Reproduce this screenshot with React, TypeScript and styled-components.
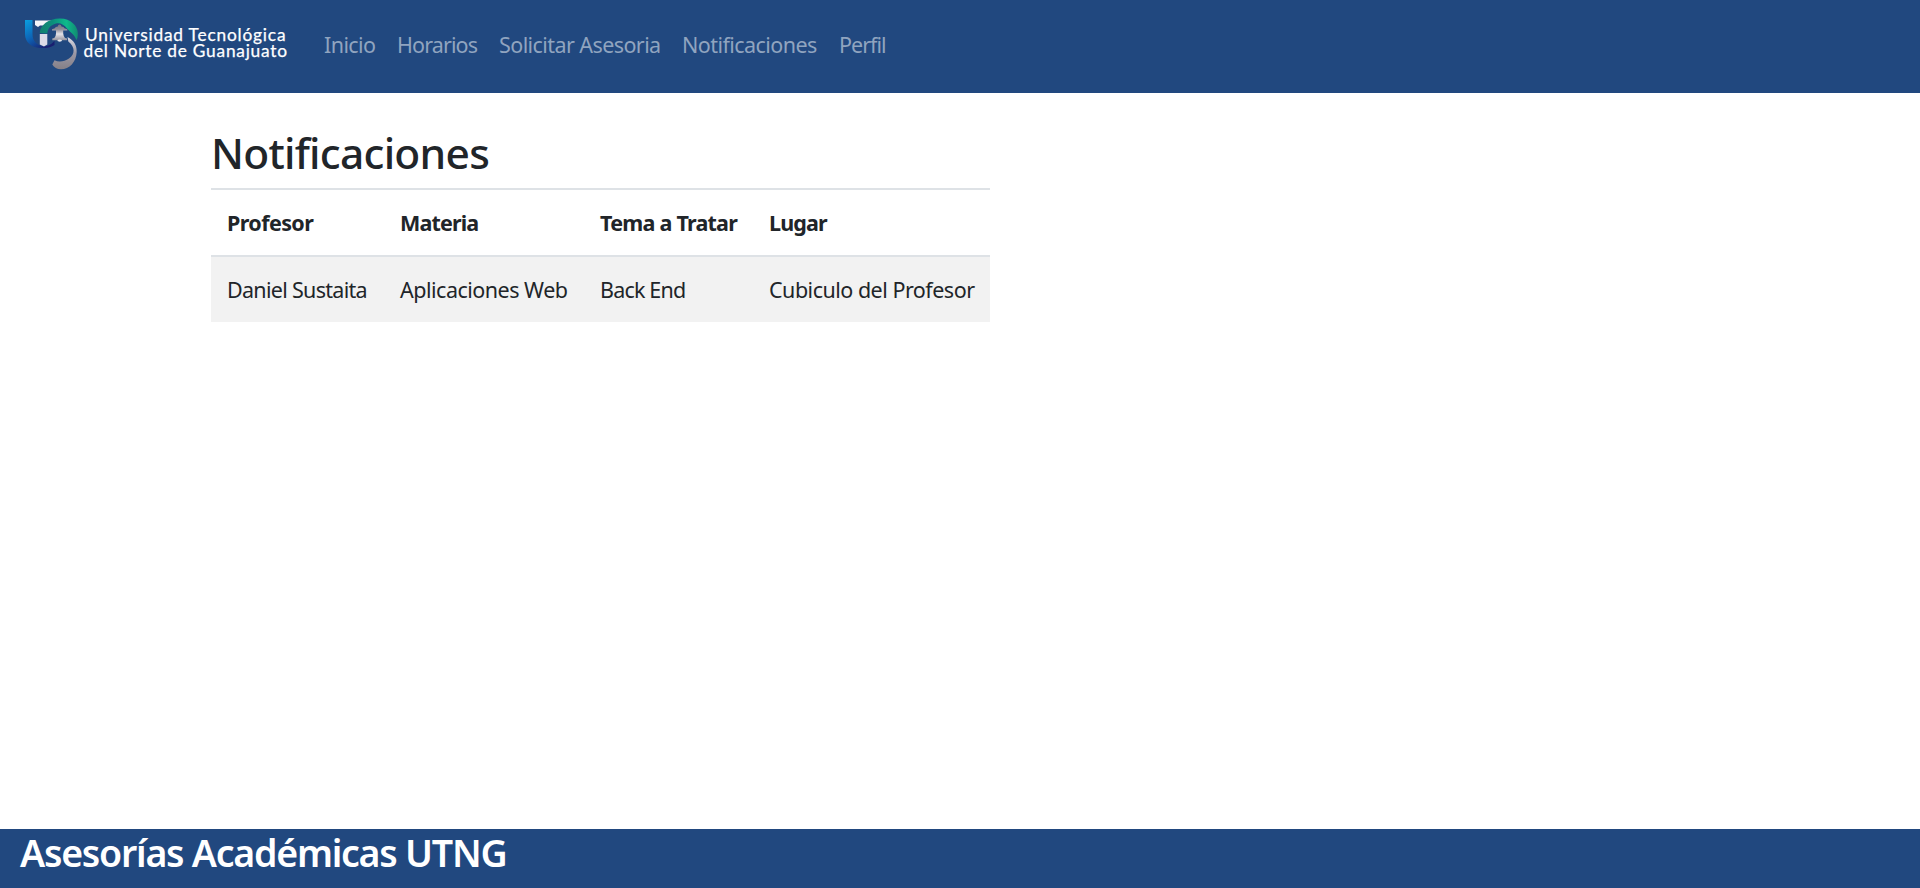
import React from "react";
import styled, { createGlobalStyle } from "styled-components";

const GlobalStyle = createGlobalStyle`
  * { box-sizing: border-box; }
  body {
    margin: 0;
    background: #fff;
    color: #212529;
    font-family: "Noto Sans", sans-serif;
    font-size: 21.5px;
    line-height: 33px;
  }
`;

const Page = styled.div`
  display: flex;
  flex-direction: column;
  height: 100vh;
  overflow: hidden;
`;

const Navbar = styled.header`
  display: flex;
  align-items: flex-start;
  height: 93px;
  flex: none;
  padding-left: 22px;
  background: #21487f;
`;

const Brand = styled.a`
  display: block;
  width: 291px;
  height: 93px;
`;

const NavList = styled.nav`
  display: flex;
  padding-top: 28px;
`;

const NavLink = styled.a<{ $width: number; $spacing: number }>`
  width: ${(p) => p.$width}px;
  padding-left: 11px;
  color: #90a4bf;
  letter-spacing: ${(p) => p.$spacing}px;
  white-space: nowrap;
  text-decoration: none;
`;

const Main = styled.main`
  flex: 1;
  padding: 33px 0 0 211px;
`;

const Title = styled.h1`
  margin: 0 0 9px;
  font-size: 42.5px;
  font-weight: 500;
  line-height: 53px;
  letter-spacing: -0.75px;
`;

const Table = styled.table`
  width: 779px;
  table-layout: fixed;
  border-collapse: separate;
  border-spacing: 0;
  border-top: 2px solid #dee2e6;
`;

const HeadCell = styled.th<{ $width: number; $spacing: number }>`
  width: ${(p) => p.$width}px;
  height: 67px;
  padding: 0 0 0 16px;
  border-bottom: 2px solid #dee2e6;
  text-align: left;
  font-weight: 700;
  letter-spacing: ${(p) => p.$spacing}px;
  white-space: nowrap;
`;

const Cell = styled.td<{ $spacing: number }>`
  height: 65px;
  padding: 0 0 0 16px;
  background: #f2f2f2;
  letter-spacing: ${(p) => p.$spacing}px;
  white-space: nowrap;
`;

const Footer = styled.footer`
  flex: none;
  height: 59px;
  padding: 1px 0 0 20px;
  background: #21487f;
  color: #fff;
`;

const FooterTitle = styled.h2`
  margin: 0;
  font-size: 37.5px;
  font-weight: 600;
  line-height: 46px;
  letter-spacing: -1.25px;
`;

const links = [
  { label: "Inicio", width: 73, spacing: -0.6 },
  { label: "Horarios", width: 102, spacing: -0.88 },
  { label: "Solicitar Asesoria", width: 183, spacing: -0.58 },
  { label: "Notificaciones", width: 157, spacing: -0.55 },
  { label: "Perfil", width: 70, spacing: -1 },
];

const columns = [
  { label: "Profesor", width: 173, spacing: -0.6 },
  { label: "Materia", width: 200, spacing: -0.85 },
  { label: "Tema a Tratar", width: 169, spacing: -0.75 },
  { label: "Lugar", width: 237, spacing: -0.85 },
];

const rows = [
  [
    { text: "Daniel Sustaita", spacing: -0.7 },
    { text: "Aplicaciones Web", spacing: -0.5 },
    { text: "Back End", spacing: -0.82 },
    { text: "Cubiculo del Profesor", spacing: -0.5 },
  ],
];

const Logo = () => (
  <svg width="270" height="93" viewBox="22 0 270 93" role="img" aria-label="UTNG">
    <defs>
      <linearGradient id="u" x1="0" y1="0" x2="0.7" y2="1">
        <stop offset="0" stopColor="#0a9fe0" />
        <stop offset="0.5" stopColor="#0d66b8" />
        <stop offset="1" stopColor="#191f70" />
      </linearGradient>
      <linearGradient id="n" x1="0" y1="0" x2="1" y2="0">
        <stop offset="0" stopColor="#12806f" />
        <stop offset="0.35" stopColor="#0b8f7c" />
        <stop offset="0.7" stopColor="#0fba8b" />
        <stop offset="1" stopColor="#118a72" />
      </linearGradient>
      <linearGradient id="g" x1="0" y1="0" x2="0" y2="1">
        <stop offset="0" stopColor="#dddde6" />
        <stop offset="0.5" stopColor="#9a98a6" />
        <stop offset="1" stopColor="#857f86" />
      </linearGradient>
      <linearGradient id="bell" x1="0" y1="0" x2="0" y2="1">
        <stop offset="0" stopColor="#77747f" />
        <stop offset="0.3" stopColor="#8f8c97" />
        <stop offset="0.6" stopColor="#e4e2e8" />
        <stop offset="1" stopColor="#96939d" />
      </linearGradient>
    </defs>
    <path d="M25 20H32.5V34C32.5 41 36.5 45 43 46C48 46.5 52 44 54.5 40.5V45C51 47.5 47 48 42 48C31 48 25 42 25 34Z" fill="url(#u)" />
    <path d="M35 20.5H54L47 28H44L43.5 25.5H40L38 27L35 25Z" fill="#f4f4f8" />
    <path d="M39.7 33C40.5 25 48 18.5 60 18.5C71 18.5 77.5 26 77.8 33C78 36.5 77.3 39 76.3 40C75 35 71 33 67 28.5C64 24.5 60 22.5 56 23.5C50 25.5 48 28 47.3 33.5Z" fill="url(#n)" />
    <path d="M39.8 34H47.3V44.5L44 46.5L39.8 44.5Z" fill="#dcdce8" />
    <path d="M57.8 26.5Q58 24.6 59.6 24.6Q61.3 24.6 61.5 26.5Q64 26.8 64.5 28.3L67.3 29.2V30.4H63.2V33.5Q63.5 36.5 65 38L67 38.6V40.3H52.3V38.6L54.3 38Q55.9 36.5 56 33.5V30.4H52V29.2L54.8 28.3Q55.3 26.8 57.8 26.5Z" fill="url(#bell)" />
    <ellipse cx="59.7" cy="40.6" rx="2.3" ry="1.1" fill="#e9e9ee" />
    <path d="M67.5 37C73.5 40 77 45 76.7 52C76.3 62 69.5 69.3 61 69.3C57 69.3 54 67.5 52.3 64.5L54.5 60.2C59 62.6 64.5 61.5 69 58.5C75.5 54 75 46.5 68.3 41.5Z" fill="url(#g)" />
    <g fill="#fff" stroke="#fff" strokeWidth="0.25" fontFamily="Lato, sans-serif" fontSize="17.3">
      <text x="85" y="41.3" textLength="200.5">Universidad Tecnológica</text>
      <text x="83.5" y="57.2" textLength="203.5">del Norte de Guanajuato</text>
    </g>
  </svg>
);

export default function App() {
  return (
    <Page>
      <GlobalStyle />
      <Navbar>
        <Brand href="#"><Logo /></Brand>
        <NavList>
          {links.map((l) => (
            <NavLink key={l.label} href="#" $width={l.width} $spacing={l.spacing}>{l.label}</NavLink>
          ))}
        </NavList>
      </Navbar>
      <Main>
        <Title>Notificaciones</Title>
        <Table>
          <thead>
            <tr>
              {columns.map((c) => (
                <HeadCell key={c.label} $width={c.width} $spacing={c.spacing}>{c.label}</HeadCell>
              ))}
            </tr>
          </thead>
          <tbody>
            {rows.map((row, i) => (
              <tr key={i}>
                {row.map((c) => <Cell key={c.text} $spacing={c.spacing}>{c.text}</Cell>)}
              </tr>
            ))}
          </tbody>
        </Table>
      </Main>
      <Footer><FooterTitle>Asesorías Académicas UTNG</FooterTitle></Footer>
    </Page>
  );
}
